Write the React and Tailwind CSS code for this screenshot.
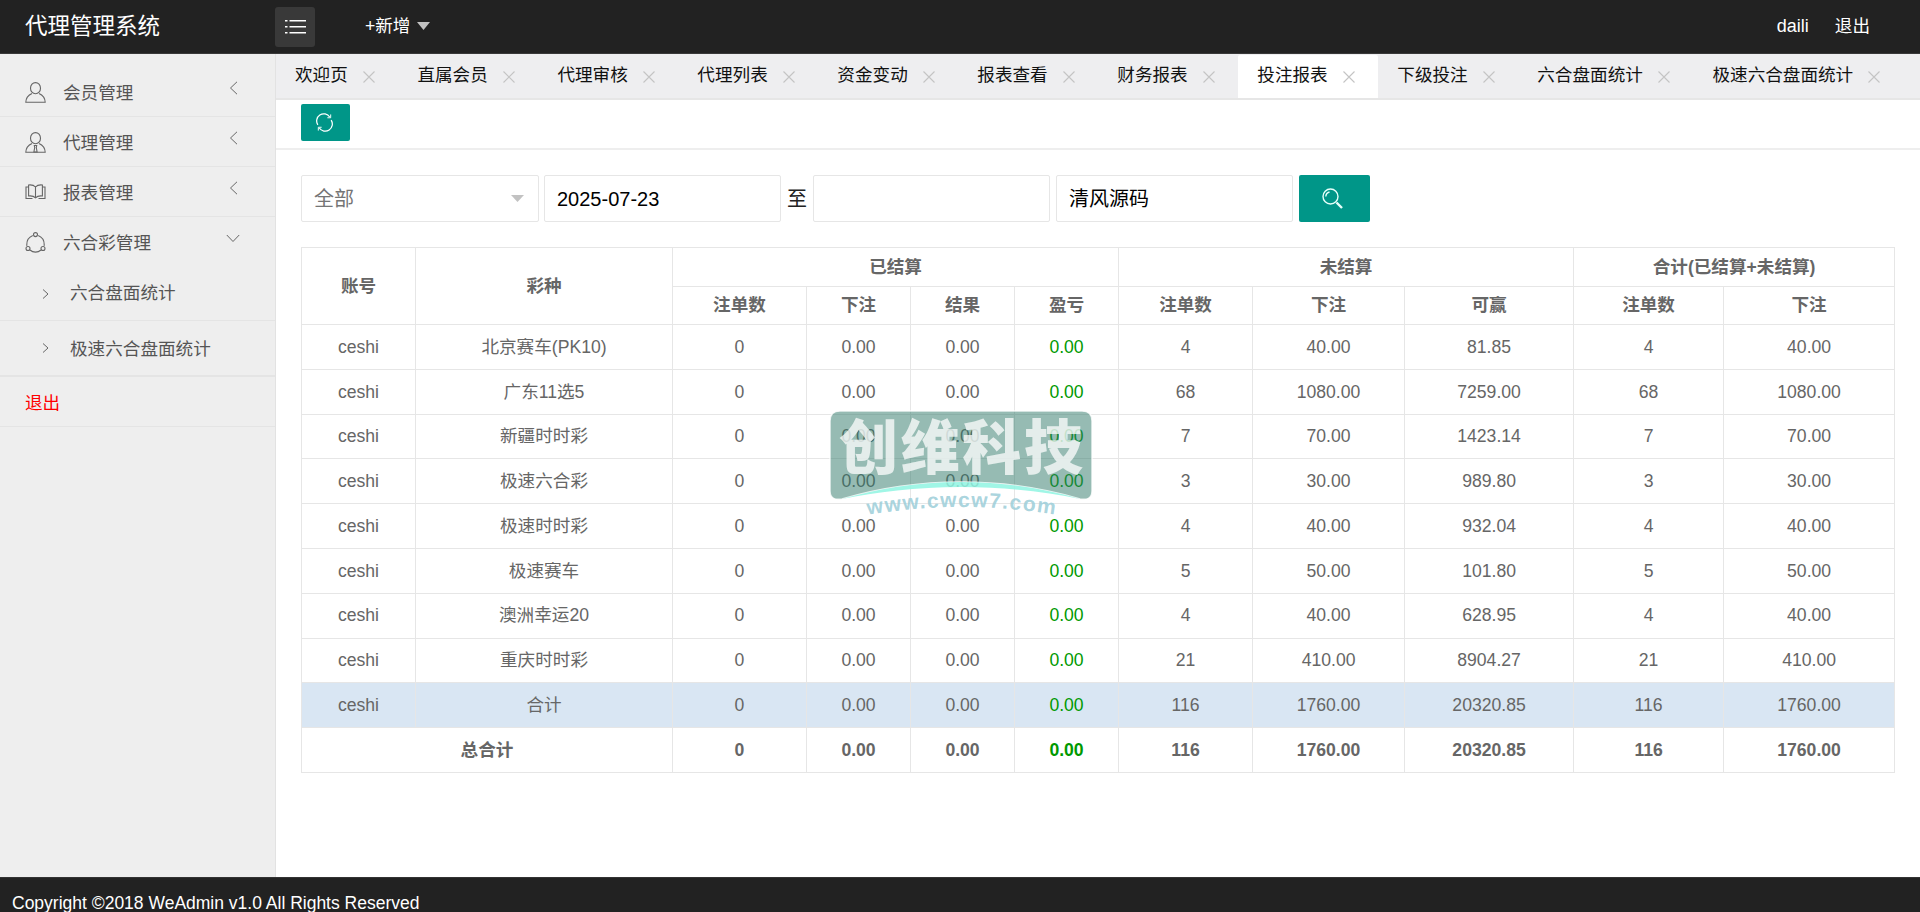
import React from "react";

const tabs = ["欢迎页", "直属会员", "代理审核", "代理列表", "资金变动", "报表查看", "财务报表", "投注报表", "下级投注", "六合盘面统计", "极速六合盘面统计"];

const rows = [
    ["北京赛车(PK10)", "4", "40.00", "81.85"],
    ["广东11选5", "68", "1080.00", "7259.00"],
    ["新疆时时彩", "7", "70.00", "1423.14"],
    ["极速六合彩", "3", "30.00", "989.80"],
    ["极速时时彩", "4", "40.00", "932.04"],
    ["极速赛车", "5", "50.00", "101.80"],
    ["澳洲幸运20", "4", "40.00", "628.95"],
    ["重庆时时彩", "21", "410.00", "8904.27"],
];

const cell = "border border-[#e6e6e6] text-center font-normal";
const head = "border border-[#e6e6e6] text-center font-bold";

function UserIcon() {
    return (
        <svg width="21" height="21" viewBox="0 0 21 21" fill="none" stroke="#666" strokeWidth="1.1">
            <ellipse cx="10.5" cy="6.2" rx="5" ry="5.6" />
            <path d="M7 11.5C3.5 13 1 15.5 .8 20.3H20.2C20 15.5 17.5 13 14 11.5" />
        </svg>
    );
}

function AgentIcon() {
    return (
        <svg width="21" height="21" viewBox="0 0 21 21" fill="none" stroke="#666" strokeWidth="1.1">
            <ellipse cx="10.5" cy="6.2" rx="5" ry="5.6" />
            <path d="M7 11.5C3.5 13 1 15.5 .8 20.3H20.2C20 15.5 17.5 13 14 11.5" />
            <path d="M9.3 13.5h2.4l-.4 2 .8 4.5h-3.2l.8-4.5z" />
        </svg>
    );
}

function BookIcon() {
    return (
        <svg width="21" height="16" viewBox="0 0 21 16" fill="none" stroke="#666" strokeWidth="1.1">
            <path d="M10.5 3C9 1.3 6.5.7 3.6 1v11c3-.3 5.4.2 6.9 1.8 1.5-1.6 3.9-2.1 6.9-1.8V1c-2.9-.3-5.4.3-6.9 2zM10.5 3v10.8" />
            <path d="M3.6 3H1v11.5h6.5M17.4 3H20v11.5h-6.5" />
        </svg>
    );
}

function RingIcon() {
    return (
        <svg width="21" height="21" viewBox="0 0 21 21" fill="none" stroke="#666" strokeWidth="1.1">
            <circle cx="10.5" cy="2.6" r="2" />
            <circle cx="3" cy="16.5" r="2" />
            <circle cx="18" cy="16.5" r="2" />
            <path d="M7.8 3.4C4 5 1.7 8.5 1.8 12.5c0 .5 0 .9.1 1.4M13.2 3.4c3.8 1.6 6.1 5.1 6 9.1 0 .5 0 .9-.1 1.4M5 18c1.5 1.3 3.5 2.1 5.5 2.1s4-.8 5.5-2.1" />
        </svg>
    );
}

function SideItem({ icon, label, chevron }) {
    return (
        <div className={`flex h-[50px] items-center pl-[25px] ${chevron ? "border-b border-[#e4e4e4]" : ""}`}>
            <span className="mt-[1px] flex w-[38px] shrink-0 items-center">{icon}</span>
            <span className="mt-[3px]">{label}</span>
            {chevron ? (
                <svg width="9" height="14" viewBox="0 0 9 14" fill="none" stroke="#666" strokeWidth="1" className="mb-[8px] ml-auto mr-[37px]">
                    <path d="M8 .8 1.5 7 8 13.2" />
                </svg>
            ) : (
                <svg width="14" height="9" viewBox="0 0 14 9" fill="none" stroke="#666" strokeWidth="1" className="mb-[8px] ml-auto mr-[35px]">
                    <path d="M.8 1 7 7.5 13.2 1" />
                </svg>
            )}
        </div>
    );
}

function SubItem({ label, className, labelClass }) {
    return (
        <div className={`flex items-center pl-[42px] ${className}`}>
            <svg width="7" height="10" viewBox="0 0 7 10" fill="none" stroke="#666" strokeWidth="1" className="mr-[21px]">
                <path d="M1 .5 6 5 1 9.5" />
            </svg>
            <span className={labelClass}>{label}</span>
        </div>
    );
}

function Watermark() {
    return (
        <svg width="270" height="116" viewBox="0 0 270 116" className="pointer-events-none absolute left-[826px] top-[407px]">
            <path
                d="M14 4H256Q266 4 266 14V84Q266 94 254 92C220 82 180 75 135 75S50 82 16 92Q4 94 4 84V14Q4 4 14 4Z"
                fill="#2d7867"
                fillOpacity=".5"
                stroke="#fff"
                strokeOpacity=".8"
                strokeWidth="1.5"
            />
            <path d="M16 92C50 82 90 75 135 75S220 82 254 92C220 85 180 80 135 80S50 85 16 92Z" fill="#8ff5e2" fillOpacity=".85" />
            <text x="13" y="62" textLength="244" fontSize="59" fontWeight="900" fill="#fff" fillOpacity=".74" fontFamily="'Noto Sans CJK SC', sans-serif">
                创维科技
            </text>
            <path id="wm-arc" d="M20 112Q136 88 252 112" fill="none" />
            <text fontSize="21" fontWeight="700" letterSpacing="1.4" fill="#9fcfda" fillOpacity=".9" fontFamily="'Liberation Sans', sans-serif" textAnchor="middle">
                <textPath href="#wm-arc" startOffset="50%">www.cwcw7.com</textPath>
            </text>
        </svg>
    );
}

export default function App() {
    return (
        <div className="relative flex h-screen flex-col overflow-hidden bg-white font-['Liberation_Sans','Noto_Sans_CJK_SC',sans-serif] text-[17.6px] text-[#666]">
            <header className="flex h-[54px] shrink-0 items-center border-b border-[#393939] bg-[#222] text-white">
                <div className="ml-[25px] w-[250px] text-[22.5px]">代理管理系统</div>
                <div className="flex h-[40px] w-[40px] items-center justify-center rounded-[3px] bg-[#393939]">
                    <svg width="21" height="14" viewBox="0 0 21 14" fill="#fff">
                        <rect x="0" y="0" width="2.5" height="1.5" />
                        <rect x="4.5" y="0" width="16.5" height="1.5" />
                        <rect x="0" y="6" width="2.5" height="1.5" />
                        <rect x="4.5" y="6" width="16.5" height="1.5" />
                        <rect x="0" y="12" width="2.5" height="1.5" />
                        <rect x="4.5" y="12" width="16.5" height="1.5" />
                    </svg>
                </div>
                <div className="ml-[50px] flex items-center">
                    <span>+新增</span>
                    <svg width="13" height="8" viewBox="0 0 13 8" fill="#c2c2c2" className="ml-[7px]">
                        <path d="M0 0h13L6.5 8z" />
                    </svg>
                </div>
                <div className="ml-auto mr-[50px] flex items-center gap-[26px]">
                    <span className="text-[18px]">daili</span>
                    <span>退出</span>
                </div>
            </header>

            <div className="flex min-h-0 flex-1">
                <aside className="w-[276px] shrink-0 border-r border-[#e2e2e2] bg-[#eee] pt-[13px] text-[#555]">
                    <SideItem icon={<UserIcon />} label="会员管理" chevron />
                    <SideItem icon={<AgentIcon />} label="代理管理" chevron />
                    <SideItem icon={<BookIcon />} label="报表管理" chevron />
                    <SideItem icon={<RingIcon />} label="六合彩管理" />
                    <SubItem label="六合盘面统计" className="h-[54px] border-b border-[#e4e4e4]" />
                    <SubItem label="极速六合盘面统计" labelClass="mt-[3px]" className="h-[56px] border-b-2 border-[#e4e4e4]" />
                    <div className="flex h-[50px] items-center border-b border-[#e4e4e4] pl-[25px] pt-[3px] text-[#f00]">退出</div>
                </aside>

                <main className="min-w-0 flex-1">
                    <div className="flex h-[46px] items-end overflow-hidden border-b-2 border-[#e6e6e6] bg-[#eeeef0]">
                        {tabs.map((t, i) => (
                            <div
                                key={t}
                                className={`flex h-[43px] shrink-0 items-center pb-[2px] pl-[19px] pr-[23.6px] text-[#111] ${i === 7 ? "rounded-t-[2px] bg-white" : ""}`}
                            >
                                <span>{t}</span>
                                <svg width="12" height="12" viewBox="0 0 12 12" fill="none" stroke="#c4c4c4" strokeWidth="1.1" className="ml-[15px] mt-[2px]">
                                    <path d="M.5.5l11 11M11.5.5l-11 11" />
                                </svg>
                            </div>
                        ))}
                    </div>

                    <div className="h-[50px] border-b-2 border-[#eee] pl-[25px] pt-[4px]">
                        <button className="flex h-[37px] w-[49px] items-center justify-center rounded-[2px] bg-[#009688] pr-[3px]">
                            <svg width="19" height="19" viewBox="0 0 20 20" fill="none" stroke="#fff" strokeWidth="1.3">
                                <path d="M3 12.5A7.5 7.5 0 0 1 15.5 4.2" />
                                <path d="M17 7.5A7.5 7.5 0 0 1 4.5 15.8" />
                                <path d="M16.5 1.5v3.5h-3.5M3.5 18.5v-3.5h3.5" strokeWidth="1" />
                            </svg>
                        </button>
                    </div>

                    <div className="px-[25px] pt-[25px]">
                        <div className="flex h-[47px] items-stretch text-[20px]">
                            <div className="flex w-[238px] items-center justify-between rounded-[2px] border border-[#e6e6e6] pl-[12px] pr-[14px] text-[#757575]">
                                <span>全部</span>
                                <svg width="13" height="7" viewBox="0 0 13 7" fill="#c2c2c2">
                                    <path d="M0 0h13L6.5 7z" />
                                </svg>
                            </div>
                            <input readOnly value="2025-07-23" className="ml-[5px] w-[237px] rounded-[2px] border border-[#e6e6e6] pl-[12px] text-black outline-none" />
                            <span className="flex w-[32px] items-center justify-center text-[#222]">至</span>
                            <input readOnly className="w-[237px] rounded-[2px] border border-[#e6e6e6] outline-none" />
                            <input readOnly value="清风源码" className="ml-[6px] w-[237px] rounded-[2px] border border-[#e6e6e6] pl-[12px] text-black outline-none" />
                            <button className="ml-[6px] flex w-[71px] items-center justify-center rounded-[2px] bg-[#009688] pr-[3px]">
                                <svg width="22" height="21" viewBox="0 0 22 21" fill="none" stroke="#e6fffa" strokeWidth="1.4">
                                    <circle cx="8.5" cy="8.5" r="7.5" />
                                    <path d="M3.8 8.5A5 5 0 0 1 7.5 4" />
                                    <path d="M14.5 14.5l5.5 5.5" strokeWidth="2.4" />
                                </svg>
                            </button>
                        </div>

                        <table className="mt-[25px] w-[1593px] table-fixed border-collapse border border-[#e6e6e6]">
                            <colgroup>
                                <col className="w-[114px]" />
                                <col className="w-[257px]" />
                                <col className="w-[134px]" />
                                <col className="w-[104px]" />
                                <col className="w-[104px]" />
                                <col className="w-[104px]" />
                                <col className="w-[134px]" />
                                <col className="w-[152px]" />
                                <col className="w-[169px]" />
                                <col className="w-[150px]" />
                                <col className="w-[171px]" />
                            </colgroup>
                            <thead>
                                <tr className="h-[39px]">
                                    <th rowSpan={2} className={head}>账号</th>
                                    <th rowSpan={2} className={head}>彩种</th>
                                    <th colSpan={4} className={head}>已结算</th>
                                    <th colSpan={3} className={head}>未结算</th>
                                    <th colSpan={2} className={head}>合计(已结算+未结算)</th>
                                </tr>
                                <tr className="h-[38px]">
                                    {["注单数", "下注", "结果", "盈亏", "注单数", "下注", "可赢", "注单数", "下注"].map((h, i) => (
                                        <th key={i} className={head}>{h}</th>
                                    ))}
                                </tr>
                            </thead>
                            <tbody>
                                {rows.map((r) => (
                                    <tr key={r[0]} className="h-[44.8px]">
                                        <td className={cell}>ceshi</td>
                                        <td className={cell}>{r[0]}</td>
                                        <td className={cell}>0</td>
                                        <td className={cell}>0.00</td>
                                        <td className={cell}>0.00</td>
                                        <td className={`${cell} text-[#090]`}>0.00</td>
                                        <td className={cell}>{r[1]}</td>
                                        <td className={cell}>{r[2]}</td>
                                        <td className={cell}>{r[3]}</td>
                                        <td className={cell}>{r[1]}</td>
                                        <td className={cell}>{r[2]}</td>
                                    </tr>
                                ))}
                                <tr className="h-[44.8px] bg-[#d9e6f3]">
                                    <td className={cell}>ceshi</td>
                                    <td className={cell}>合计</td>
                                    <td className={cell}>0</td>
                                    <td className={cell}>0.00</td>
                                    <td className={cell}>0.00</td>
                                    <td className={`${cell} text-[#090]`}>0.00</td>
                                    <td className={cell}>116</td>
                                    <td className={cell}>1760.00</td>
                                    <td className={cell}>20320.85</td>
                                    <td className={cell}>116</td>
                                    <td className={cell}>1760.00</td>
                                </tr>
                                <tr className="h-[44.8px] font-bold">
                                    <td colSpan={2} className={head}>总合计</td>
                                    <td className={head}>0</td>
                                    <td className={head}>0.00</td>
                                    <td className={head}>0.00</td>
                                    <td className={`${head} text-[#090]`}>0.00</td>
                                    <td className={head}>116</td>
                                    <td className={head}>1760.00</td>
                                    <td className={head}>20320.85</td>
                                    <td className={head}>116</td>
                                    <td className={head}>1760.00</td>
                                </tr>
                            </tbody>
                        </table>
                    </div>
                </main>
            </div>

            <footer className="h-[35px] shrink-0 border-t border-[#333] bg-[#222] pl-[12px] pt-[13px] text-[17.5px] leading-[24px] text-white">
                Copyright ©2018 WeAdmin v1.0 All Rights Reserved
            </footer>

            <Watermark />
        </div>
    );
}
